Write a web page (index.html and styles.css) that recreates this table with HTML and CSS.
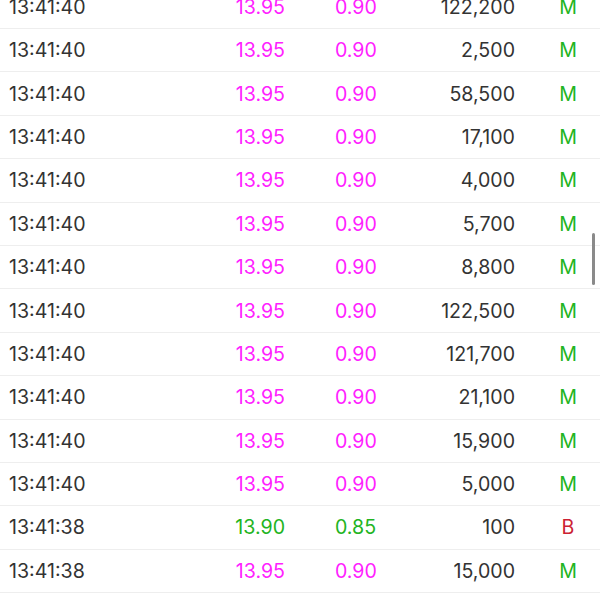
FILE: index.html
```html
<!DOCTYPE html>
<html>
<head>
<meta charset="utf-8">
<link rel="stylesheet" href="styles.css">
</head>
<body>
<div class="trades">
  <div class="row"><span class="time">13:41:40</span><span class="price up">13.95</span><span class="chg up">0.90</span><span class="vol">122,200</span><span class="type m">M</span></div>
  <div class="row"><span class="time">13:41:40</span><span class="price up">13.95</span><span class="chg up">0.90</span><span class="vol">2,500</span><span class="type m">M</span></div>
  <div class="row"><span class="time">13:41:40</span><span class="price up">13.95</span><span class="chg up">0.90</span><span class="vol">58,500</span><span class="type m">M</span></div>
  <div class="row"><span class="time">13:41:40</span><span class="price up">13.95</span><span class="chg up">0.90</span><span class="vol">17,100</span><span class="type m">M</span></div>
  <div class="row"><span class="time">13:41:40</span><span class="price up">13.95</span><span class="chg up">0.90</span><span class="vol">4,000</span><span class="type m">M</span></div>
  <div class="row"><span class="time">13:41:40</span><span class="price up">13.95</span><span class="chg up">0.90</span><span class="vol">5,700</span><span class="type m">M</span></div>
  <div class="row"><span class="time">13:41:40</span><span class="price up">13.95</span><span class="chg up">0.90</span><span class="vol">8,800</span><span class="type m">M</span></div>
  <div class="row"><span class="time">13:41:40</span><span class="price up">13.95</span><span class="chg up">0.90</span><span class="vol">122,500</span><span class="type m">M</span></div>
  <div class="row"><span class="time">13:41:40</span><span class="price up">13.95</span><span class="chg up">0.90</span><span class="vol">121,700</span><span class="type m">M</span></div>
  <div class="row"><span class="time">13:41:40</span><span class="price up">13.95</span><span class="chg up">0.90</span><span class="vol">21,100</span><span class="type m">M</span></div>
  <div class="row"><span class="time">13:41:40</span><span class="price up">13.95</span><span class="chg up">0.90</span><span class="vol">15,900</span><span class="type m">M</span></div>
  <div class="row"><span class="time">13:41:40</span><span class="price up">13.95</span><span class="chg up">0.90</span><span class="vol">5,000</span><span class="type m">M</span></div>
  <div class="row"><span class="time">13:41:38</span><span class="price flat">13.90</span><span class="chg flat">0.85</span><span class="vol">100</span><span class="type b">B</span></div>
  <div class="row"><span class="time">13:41:38</span><span class="price up">13.95</span><span class="chg up">0.90</span><span class="vol">15,000</span><span class="type m">M</span></div>
</div>
<div class="scroll-indicator"></div>
</body>
</html>
```
FILE: styles.css
```css
html, body {
  margin: 0;
  padding: 0;
  background: #ffffff;
  overflow: hidden;
  height: 600px;
}
body {
  font-family: Inter, "Liberation Sans", sans-serif;
  font-size: 19.6px;
  color: #333333;
}
.trades {
  margin-top: -14.4px;
}
.row {
  box-sizing: border-box;
  height: 43.4px;
  border-bottom: 1px solid #eeeeee;
  display: grid;
  grid-template-columns: 191px 85px 130px 100px 1fr;
  align-items: center;
  padding-left: 9px;
}
.price { text-align: right; }
.chg { padding-left: 50px; }
.vol { text-align: right; }
.type { text-align: center; padding-left: 21px; }
.up { color: #ff22ff; }
.flat { color: #22b422; }
.m { color: #22b422; }
.b { color: #cc2233; }
.scroll-indicator {
  position: absolute;
  left: 592px;
  top: 233px;
  width: 3px;
  height: 52px;
  border-radius: 2px;
  background: #8a8a8a;
}
```
